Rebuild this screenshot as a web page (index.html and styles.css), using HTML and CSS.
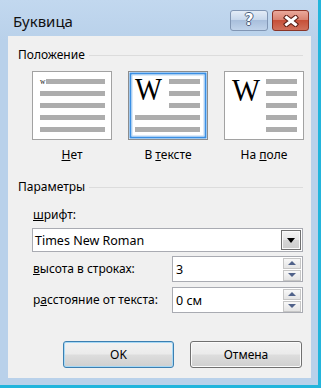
FILE: index.html
```html
<!DOCTYPE html>
<html lang="ru">
<head>
<meta charset="utf-8">
<link rel="stylesheet" href="styles.css">
</head>
<body>
<div class="window">
  <div class="titlebar">
    <span class="title">Буквица</span>
    <div class="tbtns">
      <div class="tbtn help"><span>?</span></div>
      <div class="tbtn close">
        <svg width="16" height="12" viewBox="0 0 16 12">
          <path d="M3.5 2.5 L12.5 9.5 M12.5 2.5 L3.5 9.5" stroke="#5a1d14" stroke-width="5" stroke-linecap="square"/>
          <path d="M3.5 2.5 L12.5 9.5 M12.5 2.5 L3.5 9.5" stroke="#ffffff" stroke-width="3" stroke-linecap="square"/>
        </svg>
      </div>
    </div>
  </div>
  <div class="client">
    <div class="group-head"><span>Положение</span><div class="rule"></div></div>
    <div class="positions">
      <div class="pos">
        <svg class="pic" width="80" height="69" viewBox="0 0 80 69">
          <rect x="0.5" y="0.5" width="79" height="68" fill="#fff" stroke="#a2a2a2"/>
          <text x="8" y="12.5" font-family="Liberation Serif, serif" font-size="7.5" fill="#111">w</text>
          <rect x="14" y="8" width="59" height="5" fill="#adadad"/>
          <rect x="8" y="20" width="65" height="5" fill="#adadad"/>
          <rect x="8" y="32" width="65" height="5" fill="#adadad"/>
          <rect x="8" y="44" width="65" height="5" fill="#adadad"/>
          <rect x="8" y="56" width="65" height="5" fill="#adadad"/>
        </svg>
        <span class="cap"><u>Н</u>ет</span>
      </div>
      <div class="pos">
        <svg class="pic" width="80" height="69" viewBox="0 0 80 69">
          <rect x="0.5" y="0.5" width="79" height="68" fill="#fff" stroke="#222" stroke-dasharray="1 1"/>
          <rect x="2.5" y="2.5" width="75" height="64" fill="none" stroke="#3a8fe4" stroke-width="2"/>
          <rect x="4" y="4" width="72" height="61" fill="none" stroke="#b8d5f2" stroke-width="1"/>
          <text x="7" y="29" font-family="Liberation Serif, serif" font-size="31" textLength="27" lengthAdjust="spacingAndGlyphs" fill="#000">W</text>
          <rect x="41" y="8" width="31" height="5" fill="#adadad"/>
          <rect x="41" y="20" width="31" height="5" fill="#adadad"/>
          <rect x="41" y="32" width="31" height="5" fill="#adadad"/>
          <rect x="7" y="44" width="65" height="5" fill="#adadad"/>
          <rect x="7" y="56" width="65" height="5" fill="#adadad"/>
        </svg>
        <span class="cap">В <u>т</u>ексте</span>
      </div>
      <div class="pos">
        <svg class="pic" width="80" height="69" viewBox="0 0 80 69">
          <rect x="0.5" y="0.5" width="79" height="68" fill="#fff" stroke="#a2a2a2"/>
          <text x="8" y="30" font-family="Liberation Serif, serif" font-size="31" textLength="28" lengthAdjust="spacingAndGlyphs" fill="#000">W</text>
          <rect x="42" y="8" width="31" height="5" fill="#adadad"/>
          <rect x="42" y="20" width="31" height="5" fill="#adadad"/>
          <rect x="42" y="32" width="31" height="5" fill="#adadad"/>
          <rect x="42" y="44" width="31" height="5" fill="#adadad"/>
          <rect x="42" y="56" width="31" height="5" fill="#adadad"/>
        </svg>
        <span class="cap">На <u>п</u>оле</span>
      </div>
    </div>
    <div class="group-head second"><span>Параметры</span><div class="rule"></div></div>
    <div class="params">
      <div class="field-label"><u>ш</u>рифт:</div>
      <div class="combo">
        <span class="combo-text">Times New Roman</span>
        <div class="drop"><div class="tri-down"></div></div>
      </div>
      <div class="row">
        <div class="row-label"><u>в</u>ысота в строках:</div>
        <div class="spin">
          <span class="spin-text">3</span>
          <div class="spinbtns">
            <div class="sb"><div class="tri-up-s"></div></div>
            <div class="sb"><div class="tri-down-s"></div></div>
          </div>
        </div>
      </div>
      <div class="row">
        <div class="row-label">р<u>а</u>сстояние от текста:</div>
        <div class="spin">
          <span class="spin-text">0 см</span>
          <div class="spinbtns">
            <div class="sb"><div class="tri-up-s"></div></div>
            <div class="sb"><div class="tri-down-s"></div></div>
          </div>
        </div>
      </div>
    </div>
    <div class="buttons">
      <div class="btn default">OK</div>
      <div class="btn">Отмена</div>
    </div>
  </div>
</div>
</body>
</html>
```

FILE: styles.css
```css
* { box-sizing: border-box; }
html, body { margin: 0; padding: 0; }
body {
  width: 321px;
  height: 388px;
  overflow: hidden;
  background: #b9d1ea;
  font-family: "Noto Sans", "Open Sans", sans-serif;
  font-size: 12px;
  color: #000;
}
.window {
  width: 321px;
  height: 388px;
  background: linear-gradient(#c2d8ef, #b9d1ea 40px);
  border-right: 3px solid #22b5dc;
  border-bottom: 3px solid #22b5dc;
  padding: 0 7px 7px 8px;
  display: flex;
  flex-direction: column;
}
.titlebar {
  height: 36px;
  display: flex;
  align-items: flex-start;
  justify-content: space-between;
}
.title {
  font-size: 15px;
  margin-top: 12px;
  margin-left: 5px;
  color: #111;
  line-height: 18px;
}
.tbtns {
  display: flex;
  gap: 4px;
  margin-top: 10px;
  margin-right: 2px;
}
.tbtn {
  height: 21px;
  border-radius: 3px;
  display: flex;
  align-items: center;
  justify-content: center;
}
.help {
  width: 38px;
  border: 1px solid #8196b4;
  background: linear-gradient(#e3ecf7 0%, #c8d8ec 45%, #a9bfdc 50%, #c0d3ea 100%);
}
.help span {
  font-family: "DejaVu Sans", sans-serif;
  font-weight: bold;
  font-size: 15px;
  color: #fff;
  line-height: 15px;
  text-shadow: -1px 0 #4b5e7d, 1px 0 #4b5e7d, 0 -1px #4b5e7d, 0 1px #4b5e7d;
}
.close {
  width: 37px;
  border: 1px solid #8a3427;
  background: linear-gradient(#eaa99b 0%, #d98472 45%, #c75039 50%, #d0715c 100%);
}
.client {
  height: 342px;
  background: #f0f0f0;
  padding: 11px 8px 0 10px;
  display: flex;
  flex-direction: column;
}
.group-head {
  display: flex;
  align-items: center;
  height: 16px;
  gap: 4px;
}
.group-head span { line-height: 16px; white-space: nowrap; }
.rule {
  flex: 1;
  height: 1px;
  background: #dcdcdc;
  margin-top: 1px;
}
.positions {
  display: flex;
  margin-top: 8px;
  margin-left: 14px;
  gap: 16px;
}
.pos {
  width: 80px;
  display: flex;
  flex-direction: column;
  align-items: center;
}
.pic { display: block; }
.cap {
  margin-top: 7px;
  line-height: 16px;
  white-space: nowrap;
}
.group-head.second { margin-top: 16px; }
.params {
  padding-left: 14px;
  display: flex;
  flex-direction: column;
}
.field-label {
  margin-top: 12px;
  line-height: 16px;
  padding-left: 1px;
}
.combo {
  margin-top: 5px;
  height: 24px;
  background: #fff;
  border: 1px solid #a9abb2;
  display: flex;
  align-items: center;
  justify-content: space-between;
  padding-left: 2px;
  padding-right: 1px;
}
.combo-text { font-size: 12.5px; }
.drop {
  width: 20px;
  height: 20px;
  border: 1px solid #707070;
  box-shadow: inset 0 0 0 1px #fafafa;
  background: linear-gradient(#f4f4f4, #e6e6e6 50%, #d6d6d6 51%, #cdcdcd);
  display: flex;
  align-items: center;
  justify-content: center;
}
.tri-down {
  width: 0; height: 0;
  border-left: 4px solid transparent;
  border-right: 4px solid transparent;
  border-top: 5px solid #000;
  margin-top: 1px;
}
.row {
  display: flex;
  align-items: center;
  justify-content: space-between;
  height: 26px;
  margin-top: 4px;
}
.row + .row { margin-top: 5px; }
.row-label { padding-left: 1px; line-height: 16px; }
.spin {
  width: 131px;
  height: 26px;
  background: #fff;
  border: 1px solid #a9abb2;
  display: flex;
  align-items: center;
  justify-content: space-between;
  padding-left: 3px;
  padding-right: 1px;
}
.spin-text { font-size: 12.5px; }
.spinbtns {
  display: flex;
  flex-direction: column;
  gap: 1px;
}
.sb {
  width: 18px;
  height: 11px;
  border: 1px solid #c6c6c6;
  background: linear-gradient(#f8f8f8, #e4e4e4);
  display: flex;
  align-items: center;
  justify-content: center;
}
.tri-up-s {
  width: 0; height: 0;
  border-left: 4px solid transparent;
  border-right: 4px solid transparent;
  border-bottom: 4px solid #50628a;
}
.tri-down-s {
  width: 0; height: 0;
  border-left: 4px solid transparent;
  border-right: 4px solid transparent;
  border-top: 4px solid #50628a;
}
.buttons {
  display: flex;
  justify-content: flex-end;
  gap: 16px;
  margin-top: 28px;
  padding-right: 1px;
}
.btn {
  width: 112px;
  height: 27px;
  border: 1px solid #707070;
  border-radius: 3px;
  background: linear-gradient(#f2f2f2 0%, #ebebeb 48%, #dddddd 52%, #cfcfcf 100%);
  box-shadow: inset 0 0 0 1px #fbfbfb;
  display: flex;
  align-items: center;
  justify-content: center;
  line-height: 16px;
}
.btn.default {
  width: 111px;
  border-color: #3c7fb1;
  box-shadow: inset 0 0 0 1px #a6d8f5;
}
```
